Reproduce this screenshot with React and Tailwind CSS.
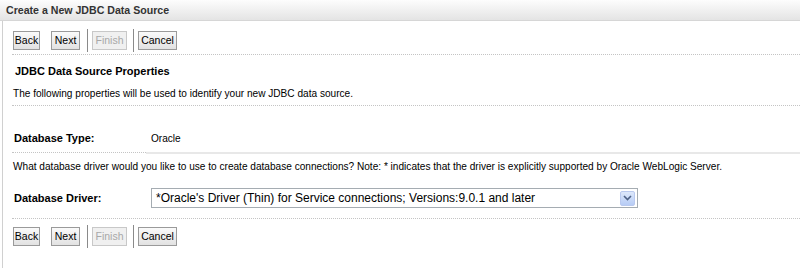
const tahoma = { fontFamily: '"Liberation Sans", Arial, sans-serif' };

function Btn({ label, width, disabled }) {
  return (
    <button
      disabled={disabled}
      className={
        'h-[19px] border text-[10.5px] leading-none text-center ' +
        width +
        (disabled
          ? ' border-[#c8c8c8] bg-[#f0f0f0] text-[#a8a8a8]'
          : ' border-[#9a9a9a] bg-gradient-to-b from-[#fafafa] to-[#e2e2e2] text-black')
      }
    >
      {label}
    </button>
  );
}

function ButtonBar() {
  return (
    <div className="flex items-center h-[19px] pl-[10px]">
      <Btn label="Back" width="w-[27px]" />
      <div className="w-[11px]" />
      <Btn label="Next" width="w-[29px]" />
      <div className="w-px h-[23px] bg-[#8a8a8a] ml-[7px] mr-[4px]" />
      <Btn label="Finish" width="w-[35px]" disabled />
      <div className="w-px h-[23px] bg-[#8a8a8a] ml-[6px] mr-[4px]" />
      <Btn label="Cancel" width="w-[39px]" />
    </div>
  );
}

function Dotted() {
  return <div className="ml-[9px] border-t border-dotted border-[#c4c4c4]" />;
}

export default function App() {
  return (
    <div className="w-[800px] h-[268px] bg-white text-[10.1px] leading-[13px] text-black overflow-hidden" style={tahoma}>
      <div className="h-[21px] flex items-center pl-[6px] bg-gradient-to-b from-[#fdfdfd] to-[#e4e4e4] border-b border-[#d6d6d6]">
        <span className="font-bold text-[10.6px] text-[#333]">Create a New JDBC Data Source</span>
      </div>
      <div className="border-l border-[#d0d0d0] ml-[2px] h-[247px]">
        <div className="pt-[10px]">
          <ButtonBar />
        </div>
        <div className="mt-[4px]">
          <Dotted />
        </div>
        <div className="pl-[12px] pt-[10px] font-bold text-[11px]">JDBC Data Source Properties</div>
        <div className="pl-[10px] pt-[9px]">
          The following properties will be used to identify your new JDBC data source.
        </div>
        <div className="mt-[5px]">
          <Dotted />
        </div>
        <div className="flex pt-[26px] pl-[11px]">
          <span className="w-[137px] font-bold text-[11px]">Database Type:</span>
          <span>Oracle</span>
        </div>
        <div className="mt-[7px] flex">
          <div className="ml-[9px] w-[134px] border-t border-dotted border-[#c4c4c4]" />
          <div className="flex-1 border-t-2 border-[#e8e8e8]" />
        </div>
        <div className="pl-[10px] pt-[6px]">
          What database driver would you like to use to create database connections? Note: * indicates that the driver is explicitly supported by Oracle WebLogic Server.
        </div>
        <div className="flex items-center pt-[15px] pl-[11px]">
          <span className="w-[137px] font-bold text-[11px]">Database Driver:</span>
          <div className="w-[487px] h-[20px] border border-[#a5acb2] flex items-center justify-between pl-[4px] pr-[2px] text-[12px]">
            <span>*Oracle's Driver (Thin) for Service connections; Versions:9.0.1 and later</span>
            <span className="w-[15px] h-[15px] rounded-[2px] bg-gradient-to-b from-[#dde8fb] to-[#b7ccf5] border border-[#b9c9ef] flex items-center justify-center">
              <svg width="9" height="6" viewBox="0 0 9 6">
                <path d="M1 1 L4.5 4.5 L8 1" stroke="#4d6185" strokeWidth="1.6" fill="none" />
              </svg>
            </span>
          </div>
        </div>
        <div className="mt-[10px]">
          <Dotted />
        </div>
        <div className="pt-[8px]">
          <ButtonBar />
        </div>
      </div>
    </div>
  );
}
